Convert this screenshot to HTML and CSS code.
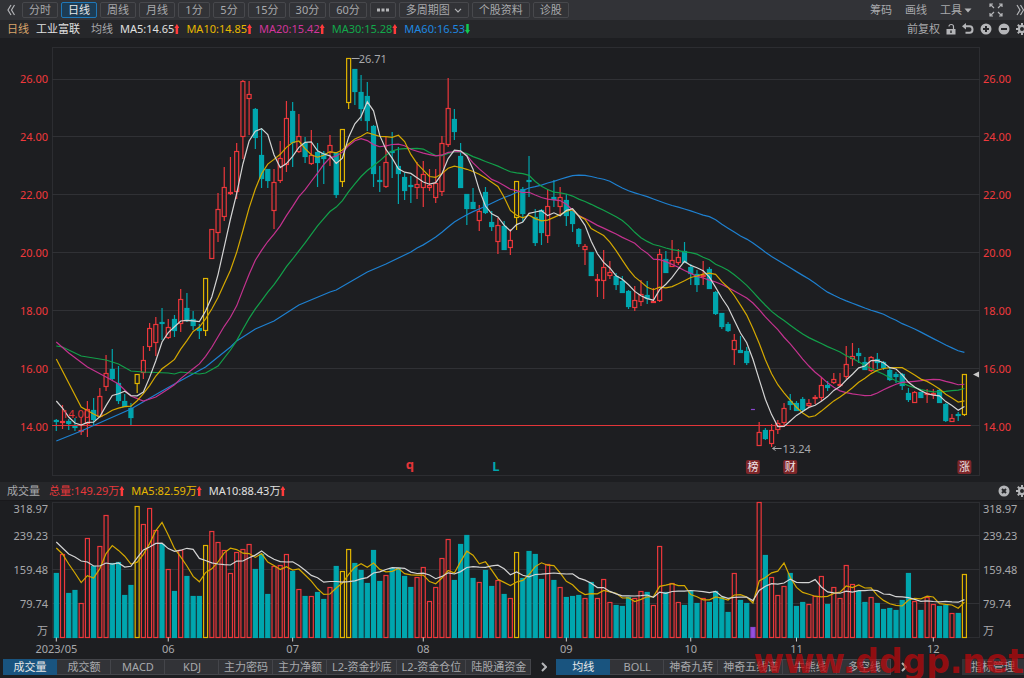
FILE: index.html
```html
<!DOCTYPE html>
<html lang="zh-CN">
<head>
    <meta charset="UTF-8">
    <meta name="viewport" content="width=device-width, initial-scale=1.0">
    <title>工业富联 日线</title>
    <link rel="stylesheet" href="styles.css">
</head>
<body>
    <header class="toolbar">
        <button class="icon-btn" aria-label="收起">
            <svg width="8" height="12" viewBox="0 0 8 12"><path d="M4 1 L1 6 L4 11 M7.500 1 L4.500 6 L7.500 11"/></svg>
        </button>
        <nav class="periods">
            <button>分时</button>
            <button class="active">日线</button>
            <button>周线</button>
            <button>月线</button>
            <button>1分</button>
            <button>5分</button>
            <button>15分</button>
            <button>30分</button>
            <button>60分</button>
            <button class="more" aria-label="更多周期">
                <svg class="dots" width="12" height="4" viewBox="0 0 12 4"><path d="M0 .5h3v3h-3z M4.500 .5h3v3h-3z M9 .5h3v3h-3z"/></svg>
            </button>
            <button>多周期图
                <svg width="8" height="5" viewBox="0 0 8 5"><path d="M1 .8 L4 3.800 L7 .8"/></svg>
            </button>
            <button>个股资料</button>
            <button>诊股</button>
        </nav>
        <div class="tools">
            <button>筹码</button>
            <button>画线</button>
            <button class="menu">工具<svg class="solid" width="8" height="5" viewBox="0 0 8 5"><path d="M.5 .5h7L4 4.500z"/></svg></button>
            <button class="expand" aria-label="全屏">
                <svg width="14" height="14" viewBox="0 0 14 14"><path d="M1 4V1H4 M1.500 1.500L5 5 M10 1H13V4 M12.500 1.500L9 5 M1 10V13H4 M1.500 12.500L5 9 M10 13H13V10 M12.500 12.500L9 9"/></svg>
            </button>
            <button class="collapse" aria-label="展开">
                <svg width="8" height="12" viewBox="0 0 8 12"><path d="M1 1 L4 6 L1 11 M4.500 1 L7.500 6 L4.500 11"/></svg>
            </button>
        </div>
    </header>

    <div class="info-bar">
        <span class="period">日线</span>
        <span class="stock">工业富联</span>
        <span class="ma-label">均线</span>
        <span class="ma5 up">MA5:14.65</span>
        <span class="ma10 up">MA10:14.85</span>
        <span class="ma20 up">MA20:15.42</span>
        <span class="ma30 up">MA30:15.28</span>
        <span class="ma60 down">MA60:16.53</span>
        <div class="info-tools">
            <button>前复权</button>
            <button aria-label="锁定">
                <svg class="solid" width="10" height="12" viewBox="0 0 10 12"><path d="M.5 6h9v5.500h-9z"/><path class="line" d="M3 3.500C3 .8 7.500 .8 7.500 3.500V6"/><path class="hole" d="M4.300 7.500h1.400v2.500h-1.400z"/></svg>
            </button>
            <button aria-label="撤销">
                <svg width="12" height="12" viewBox="0 0 12 12"><path class="thick" d="M3 3.200H7.500C11.500 3.200 11.500 9.800 7.500 9.800H3.500"/><path class="fill" d="M0 3.200L4 0V6.400z"/></svg>
            </button>
            <button aria-label="放大">
                <svg class="solid" width="12" height="12" viewBox="0 0 12 12"><circle cx="6" cy="6" r="5.500"/><path class="cut" d="M3 6H9 M6 3V9"/></svg>
            </button>
            <button aria-label="缩小">
                <svg class="solid" width="12" height="12" viewBox="0 0 12 12"><circle cx="6" cy="6" r="5.500"/><path class="cut" d="M3 6H9"/></svg>
            </button>
            <button aria-label="设置">
                <svg class="solid" width="12" height="12" viewBox="0 0 12 12"><circle cx="6" cy="6" r="4.200"/><path class="teeth" d="M6 0V12 M0 6H12 M1.800 1.800L10.200 10.200 M10.200 1.800L1.800 10.200"/><circle class="hole" cx="6" cy="6" r="2"/></svg>
            </button>
        </div>
    </div>

    <main>
        <section class="panel price-panel">
            <div class="axis left">
                <span>26.00</span><span>24.00</span><span>22.00</span><span>20.00</span><span>18.00</span><span>16.00</span><span>14.00</span>
            </div>
            <svg id="priceChart" class="plot"></svg>
            <div class="axis right">
                <span>26.00</span><span>24.00</span><span>22.00</span><span>20.00</span><span>18.00</span><span>16.00</span><span>14.00</span>
            </div>
        </section>

        <div class="info-bar volume-bar">
            <span>成交量</span>
            <span class="total up">总量:149.29万</span>
            <span class="ma10 up">MA5:82.59万</span>
            <span class="ma5 up">MA10:88.43万</span>
            <div class="info-tools">
                <button aria-label="关闭">
                    <svg class="solid" width="12" height="12" viewBox="0 0 12 12"><circle cx="6" cy="6" r="5.500"/><path class="cut" d="M4 4L8 8 M8 4L4 8"/></svg>
                </button>
                <button aria-label="指标设置">
                    <svg class="solid" width="12" height="12" viewBox="0 0 12 12"><circle cx="6" cy="6" r="4.200"/><path class="teeth" d="M6 0V12 M0 6H12 M1.800 1.800L10.200 10.200 M10.200 1.800L1.800 10.200"/><circle class="hole" cx="6" cy="6" r="2"/></svg>
                </button>
            </div>
        </div>

        <section class="panel volume-panel">
            <div class="axis left">
                <span>318.97</span><span>239.23</span><span>159.48</span><span>79.74</span><span>万</span>
            </div>
            <svg id="volumeChart" class="plot"></svg>
            <div class="axis right">
                <span>318.97</span><span>239.23</span><span>159.48</span><span>79.74</span><span>万</span>
            </div>
        </section>
    </main>

    <footer class="tabs">
        <nav class="tab-group">
            <button class="active">成交量</button>
            <button>成交额</button>
            <button>MACD</button>
            <button>KDJ</button>
            <button>主力密码</button>
            <button>主力净额</button>
            <button>L2-资金抄底</button>
            <button>L2-资金仓位</button>
            <button>陆股通资金</button>
        </nav>
        <button class="next" aria-label="下一页"><svg width="6" height="10" viewBox="0 0 6 10"><path class="thick" d="M1 1L5 5L1 9"/></svg></button>
        <nav class="tab-group">
            <button class="active">均线</button>
            <button>BOLL</button>
            <button>神奇九转</button>
            <button>神奇五线谱</button>
            <button>牛熊线</button>
            <button>多空线</button>
        </nav>
        <button class="next" aria-label="下一页"><svg width="6" height="10" viewBox="0 0 6 10"><path class="thick" d="M1 1L5 5L1 9"/></svg></button>
        <button class="manage">指标管理</button>
    </footer>

    <div class="watermark">www.ddgp.net</div>

    <script src="chart.js"></script>
</body>
</html>
```
FILE: styles.css
```css
* {
    box-sizing: border-box;
}
body {
    margin: 0;
    height: 100vh;
    display: flex;
    flex-direction: column;
    overflow: hidden;
    position: relative;
    background: #1d1e21;
    color: #a8a9ac;
    font-family: "Noto Sans", "Noto Sans CJK SC", sans-serif;
    font-size: 11px;
    line-height: 16px;
}
button {
    display: inline-flex;
    align-items: center;
    justify-content: center;
    flex: none;
    padding: 0;
    border: 0;
    background: none;
    color: inherit;
    font: inherit;
    white-space: nowrap;
    cursor: pointer;
}
button svg {
    fill: none;
    stroke: #b4b5b8;
    stroke-width: 1.2;
}
button svg.solid, button svg.dots, button svg .fill {
    fill: #b4b5b8;
    stroke: none;
}
button svg .line { fill: none; stroke: #b4b5b8; stroke-width: 1.2; }
button svg .thick { stroke-width: 2; }
button svg .teeth { stroke: #b4b5b8; stroke-width: 2; }
button svg .cut { stroke: #26272a; stroke-width: 2; }
button svg .hole { fill: #26272a; }

/* top toolbar */
.toolbar {
    display: flex;
    align-items: center;
    flex: none;
    height: 20px;
    padding-left: 6px;
    background: #323337;
}
.icon-btn {
    width: 10px;
}
.periods {
    display: flex;
    gap: 3px;
    margin-left: 6px;
}
.periods button {
    height: 16px;
    min-width: 32px;
    padding: 0 6px;
    gap: 4px;
    border: 1px solid #47484c;
    border-radius: 2px;
}
.periods button.more {
    min-width: 26px;
}
.periods button.active {
    background: #1d3c54;
    border-color: #1f78b8;
    color: #e8e8e8;
}
.tools {
    display: flex;
    align-items: center;
    gap: 13px;
    margin-left: auto;
}
.tools .menu {
    gap: 2px;
}
.tools .expand {
    margin-left: 4px;
}

/* legend rows */
.info-bar {
    display: flex;
    align-items: center;
    flex: none;
    gap: 7px;
    height: 18px;
    padding-left: 7px;
    overflow: hidden;
    white-space: nowrap;
    background: #26272a;
}
.volume-bar {
    height: 19px;
    border-bottom: 1px solid #19191c;
}
.info-tools {
    display: flex;
    gap: 6px;
    margin-left: auto;
    margin-right: -4px;
}
.period { color: #d9a56b; }
.stock { color: #e0e0e0; }
.ma-label { padding-left: 4px; }
.ma5 { color: #e0e0e0; }
.ma10 { color: #e6b800; }
.ma20 { color: #d2359c; }
.ma30 { color: #12a84a; }
.ma60 { color: #1e88e0; }
.total { color: #e8383b; padding-left: 2px; }
.up::after, .down::after {
    content: "";
    display: inline-block;
    width: 5px;
    height: 10px;
    vertical-align: -1px;
    background: #ff3b3b;
    clip-path: polygon(50% 0, 100% 40%, 75% 40%, 75% 100%, 25% 100%, 25% 40%, 0 40%);
}
.down::after {
    background: #12c850;
    clip-path: polygon(50% 100%, 100% 60%, 75% 60%, 75% 0, 25% 0, 25% 60%, 0 60%);
}

/* charts */
main {
    flex: 1;
    min-height: 0;
    display: flex;
    flex-direction: column;
}
.panel {
    display: grid;
    grid-template-columns: 52px 1fr 44px;
    min-height: 0;
}
.price-panel {
    flex: 1;
}
.volume-panel {
    flex: none;
    height: 157px;
}
.plot {
    display: block;
    width: 100%;
    height: 100%;
    min-height: 0;
    overflow: visible;
}
.axis {
    display: flex;
    flex-direction: column;
    justify-content: space-between;
    padding: 33px 4px 47px;
}
.axis.left {
    text-align: right;
}
.axis.right {
    padding-left: 3px;
}
.price-panel .axis {
    color: #f0393c;
}
.volume-panel .axis {
    display: grid;
    grid-template-columns: 1fr;
    grid-template-rows: 27px 34px 34px 27px 16px;
    align-content: start;
    padding-top: 0;
    padding-bottom: 0;
}

/* bottom tabs */
.tabs {
    display: flex;
    align-items: center;
    flex: none;
    height: 20px;
    padding: 0 0 3px 3px;
}
.tab-group {
    display: flex;
    background: #323337;
}
.tab-group button {
    height: 16px;
    min-width: 54px;
    padding: 0 4px 0 5px;
    border: 1px solid #44454a;
    border-left-width: 0;
}
.tab-group button.active {
    background: #19547f;
    border-color: #19547f;
    color: #e8e8e8;
}
.next {
    width: 25px;
    height: 16px;
}
.manage {
    height: 16px;
    margin-left: auto;
    padding: 0 9px;
    background: #323337;
}
.watermark {
    position: absolute;
    right: 0;
    bottom: 3px;
    color: rgba(190, 8, 12, 0.72);
    font: bold 33px/26px "DejaVu Sans", sans-serif;
    pointer-events: none;
}

/* svg parts */
.frame { fill: none; stroke: #2c2d31; }
.grid { stroke: #303135; }
.base { stroke: #e33539; stroke-width: 1.2; }
.tick { stroke: #d0d0d0; }
.arrow { fill: none; stroke: #a8a9ac; }
.marker { fill: #c8c8c8; }
.candle { stroke-width: 1.2; }
.candle.r { stroke: #ec373b; fill: #1d1e21; }
.candle.y { stroke: #e0b400; fill: #1d1e21; }
.candle.c { stroke: #00a6ae; fill: #00a6ae; }
.candle.p { stroke: #8a46d0; fill: #9450e0; }
.curve { fill: none; stroke-width: 1.2; }
.curve.white { stroke: #d4d4d4; }
.curve.yellow { stroke: #d4a800; }
.curve.pink { stroke: #c4328f; }
.curve.green { stroke: #12a04a; }
.curve.blue { stroke: #1e80d0; }
.note { fill: #a8a9ac; }
.note.red { fill: #e33539; }
.note.mid { text-anchor: middle; }
.badge { fill: #7d2629; }
.badge-text { fill: #f0e4e4; text-anchor: middle; }
.letter { font-size: 13px; font-weight: bold; text-anchor: middle; }
.letter.q { fill: #e33539; }
.letter.l { fill: #00a6ae; }
```
FILE: chart.js
```js
// Each day: type, wick top, body top, body bottom, wick bottom, volume top.
// Levels are chart units measured downward: 26.00 sits at 79, 14.00 at 426.
// r = rising, c = falling, y = limit up, p = placeholder day
const days = [
    ['c', 419, 420, 422, 431, 573], ['r', 405, 421, 422, 429, 554], ['c', 419, 421, 424, 430, 593],
    ['c', 418, 425, 428, 431, 590], ['r', 418, 430, 432, 435, 603], ['r', 401, 409, 424, 437, 538],
    ['c', 398, 410, 420, 426, 566], ['r', 388, 396, 417, 417, 546], ['r', 355, 373, 387, 391, 515],
    ['c', 349, 369, 379, 380, 563], ['c', 366, 383, 401, 404, 562], ['c', 394, 401, 407, 407, 595],
    ['c', 403, 408, 418, 425, 585], ['y', 374, 374, 384, 393, 506], ['r', 346, 360, 373, 379, 524],
    ['r', 323, 328, 347, 351, 508], ['r', 317, 324, 343, 356, 530], ['c', 308, 322, 324, 340, 544],
    ['r', 319, 327, 338, 339, 569], ['c', 315, 319, 331, 337, 591], ['r', 289, 299, 324, 332, 550],
    ['c', 293, 308, 321, 322, 576], ['c', 311, 319, 326, 330, 596], ['c', 324, 328, 331, 339, 596],
    ['y', 278, 278, 331, 336, 545], ['r', 229, 229, 259, 259, 531], ['r', 193, 209, 233, 242, 542],
    ['r', 167, 187, 217, 221, 550], ['r', 157, 192, 193, 195, 573], ['r', 143, 151, 192, 199, 552],
    ['r', 80, 81, 137, 159, 549], ['r', 81, 94, 99, 135, 544], ['c', 108, 109, 138, 149, 569],
    ['c', 128, 155, 179, 188, 554], ['c', 169, 169, 181, 188, 594], ['r', 169, 182, 211, 229, 566],
    ['r', 141, 158, 181, 183, 565], ['r', 101, 118, 165, 172, 554], ['c', 102, 111, 143, 167, 571],
    ['r', 114, 136, 152, 153, 589], ['c', 137, 143, 157, 163, 596], ['r', 130, 155, 164, 165, 596],
    ['c', 143, 152, 163, 187, 592], ['c', 151, 153, 159, 184, 599], ['r', 135, 145, 153, 166, 587],
    ['c', 152, 153, 195, 198, 566], ['y', 129, 129, 182, 187, 571], ['y', 58, 58, 103, 109, 549],
    ['c', 69, 69, 92, 105, 563], ['c', 75, 92, 109, 121, 570], ['c', 82, 96, 121, 131, 583],
    ['c', 125, 126, 174, 187, 550], ['c', 166, 180, 181, 192, 581], ['r', 137, 162, 187, 188, 575],
    ['c', 132, 151, 153, 178, 568], ['c', 147, 166, 174, 204, 568], ['c', 173, 177, 191, 200, 576],
    ['c', 176, 185, 187, 203, 587], ['r', 162, 184, 188, 199, 577], ['r', 161, 174, 188, 207, 567],
    ['r', 169, 185, 188, 191, 601], ['r', 169, 183, 198, 203, 587], ['r', 136, 143, 192, 196, 558],
    ['r', 78, 108, 145, 147, 539], ['c', 109, 119, 132, 140, 580], ['c', 143, 156, 188, 188, 544],
    ['c', 194, 194, 209, 225, 535], ['c', 188, 202, 209, 209, 578], ['r', 205, 211, 221, 231, 582],
    ['c', 187, 192, 213, 214, 570], ['c', 211, 222, 227, 231, 586], ['r', 218, 225, 242, 254, 580],
    ['c', 221, 226, 250, 250, 594], ['r', 229, 240, 248, 255, 598], ['y', 181, 181, 218, 230, 552],
    ['c', 187, 189, 214, 222, 578], ['c', 156, 180, 182, 197, 551], ['c', 209, 217, 243, 246, 554],
    ['c', 209, 210, 233, 245, 579], ['r', 189, 206, 236, 243, 564], ['c', 180, 197, 200, 207, 580],
    ['r', 187, 197, 207, 215, 587], ['c', 194, 200, 216, 226, 597], ['c', 210, 211, 224, 232, 596],
    ['c', 228, 229, 244, 247, 595], ['r', 244, 246, 250, 265, 598], ['c', 252, 252, 276, 276, 582],
    ['r', 274, 279, 280, 297, 598], ['r', 250, 267, 281, 299, 579], ['r', 261, 272, 276, 279, 602],
    ['c', 273, 276, 285, 290, 605], ['c', 276, 281, 293, 293, 606], ['c', 290, 291, 307, 309, 597],
    ['r', 286, 300, 308, 311, 598], ['r', 280, 294, 302, 306, 591], ['c', 281, 295, 299, 304, 592],
    ['r', 288, 301, 302, 303, 605], ['r', 249, 254, 301, 302, 546], ['c', 251, 259, 273, 273, 592],
    ['r', 240, 260, 267, 267, 583], ['r', 249, 257, 263, 265, 602], ['c', 242, 251, 263, 263, 605],
    ['c', 264, 267, 274, 285, 591], ['c', 270, 274, 285, 292, 603], ['r', 261, 275, 277, 285, 598],
    ['c', 267, 269, 289, 289, 602], ['c', 291, 292, 314, 315, 591], ['c', 313, 313, 327, 329, 597],
    ['c', 322, 324, 331, 332, 612], ['r', 334, 340, 350, 365, 573], ['c', 336, 350, 353, 353, 600],
    ['c', 347, 351, 363, 365, 603], ['p', 409, 409, 409, 409, 627], ['r', 422, 432, 446, 446, 502],
    ['c', 428, 430, 439, 440, 555], ['r', 424, 430, 444, 447, 577], ['r', 420, 423, 430, 434, 595],
    ['r', 403, 408, 423, 427, 586], ['c', 394, 401, 405, 410, 573], ['c', 401, 403, 411, 411, 606],
    ['c', 397, 399, 410, 411, 602], ['r', 399, 403, 406, 408, 604], ['r', 395, 397, 399, 404, 596],
    ['r', 377, 385, 398, 401, 576], ['c', 381, 385, 388, 391, 604], ['r', 373, 379, 383, 384, 587],
    ['r', 373, 384, 386, 387, 598], ['r', 346, 364, 377, 379, 565], ['r', 343, 356, 359, 366, 584],
    ['c', 348, 353, 356, 363, 591], ['c', 357, 362, 370, 370, 602], ['r', 356, 357, 371, 372, 597],
    ['c', 353, 359, 363, 369, 603], ['c', 361, 362, 368, 370, 609], ['c', 368, 370, 380, 381, 608],
    ['c', 372, 374, 377, 383, 610], ['c', 373, 374, 386, 390, 600], ['c', 388, 393, 400, 402, 573],
    ['r', 391, 392, 403, 403, 601], ['c', 392, 392, 398, 398, 610], ['r', 389, 393, 394, 403, 597],
    ['r', 389, 393, 394, 399, 604], ['c', 389, 390, 403, 403, 606], ['c', 403, 404, 421, 422, 605],
    ['r', 414, 418, 422, 422, 613], ['c', 412, 414, 416, 421, 613], ['y', 374, 374, 415, 416, 574]
];

// Start points [day, level] of the averages, for days before the window is full
const averages = [
    { n: 60, color: 'blue', start: [[0, 441], [4, 431], [8, 420], [12, 409], [17, 391], [19, 384], [24, 367], [28, 347], [29, 341], [32, 329], [35, 321], [39, 305], [44, 292], [45, 290], [50, 272], [53, 264], [57, 252], [58, 248]] },
    { n: 30, color: 'green', start: [[0, 346], [1, 347], [4, 356], [8, 360], [10, 364], [12, 371], [14, 372], [18, 373], [19, 374], [20, 372], [23, 374], [24, 373], [26, 366], [28, 350]] },
    { n: 20, color: 'pink', start: [[0, 342], [2, 353], [5, 367], [8, 377], [10, 384], [12, 396], [14, 401], [16, 397], [18, 389]] },
    { n: 10, color: 'yellow', start: [[0, 359], [4, 407], [6, 414], [7, 417], [8, 414]] },
    { n: 5, color: 'white', start: [[0, 401], [1, 408], [2, 417], [3, 423]] }
];
const volumeAverages = [
    { n: 5, color: 'yellow', start: [[0, 548], [1, 554], [2, 564], [3, 573]] },
    { n: 10, color: 'white', start: [[0, 542], [2, 554], [3, 557], [4, 561], [5, 562], [6, 566], [7, 566], [8, 563]] }
];

const months = [[0, '2023/05'], [18, '06'], [38, '07'], [59, '08'], [82, '09'], [102, '10'], [119, '11'], [141, '12']];
const badges = [[112, '榜'], [118, '财'], [146, '涨']];

function add(svg, tag, attrs, text) {
    const el = document.createElementNS('http://www.w3.org/2000/svg', tag);
    for (const key in attrs) el.setAttribute(key, attrs[key]);
    if (text) el.textContent = text;
    svg.appendChild(el);
    return el;
}

function line(svg, cls, x1, y1, x2, y2) {
    add(svg, 'line', { class: cls, x1, y1, x2, y2 });
}

function drawAverage(svg, avg, values, x, y) {
    const points = avg.start.map(p => [x(p[0]), y(p[1])]);
    for (let i = avg.n - 1; i < values.length; i++) {
        let sum = 0;
        for (let k = i - avg.n + 1; k <= i; k++) sum += values[k];
        points.push([x(i), y(sum / avg.n)]);
    }
    add(svg, 'polyline', { class: 'curve ' + avg.color, points: points.join(' ') });
}

function drawPrice() {
    const svg = document.getElementById('priceChart');
    svg.textContent = '';
    const w = svg.clientWidth;
    const x = i => (4.3 + i * 6.22) * w / 928;
    const y = v => (v - 38) * svg.clientHeight / 444;
    const crisp = v => Math.round(y(v)) + 0.5;

    add(svg, 'rect', { class: 'frame', x: 0.5, y: crisp(47), width: w - 1, height: crisp(475) - crisp(47) });
    for (let i = 0; i < 7; i++) line(svg, 'grid', 0, crisp(79 + i * 57.83 - 0.5), w, crisp(79 + i * 57.83 - 0.5));

    days.forEach(([type, high, top, bottom, low], i) => {
        const cls = 'candle ' + type;
        if (type === 'p') {
            line(svg, cls, x(i) - 2, crisp(top), x(i) + 2, crisp(top));
            return;
        }
        if (low > high) line(svg, cls, x(i), y(high), x(i), y(low));
        add(svg, 'rect', { class: cls, x: x(i) - 2, y: crisp(top), width: 4, height: Math.max(1, y(bottom) - y(top) - 1) });
    });

    line(svg, 'base', 0, crisp(425), x(147), crisp(425));
    const closes = days.map(d => d[0] === 'c' ? d[3] : d[2]);
    averages.forEach(avg => drawAverage(svg, avg, closes, x, y));

    add(svg, 'text', { class: 'note red', x: 10, y: y(418) }, '14.00');
    add(svg, 'path', { class: 'arrow', d: `M${x(47) + 3} ${crisp(58)}h8` });
    add(svg, 'text', { class: 'note', x: x(47) + 10, y: y(63) }, '26.71');
    add(svg, 'path', { class: 'arrow', d: `M${x(115) + 10} ${crisp(448)}h-9m3 -2l-3 2l3 2` });
    add(svg, 'text', { class: 'note', x: x(115) + 11, y: y(453) }, '13.24');
    add(svg, 'text', { class: 'letter q', x: x(57) - 1, y: y(469) }, 'q');
    add(svg, 'text', { class: 'letter l', x: x(71) - 2, y: y(471) }, 'L');
    badges.forEach(([i, name]) => {
        add(svg, 'rect', { class: 'badge', x: x(i) - 7, y: y(460), width: 14, height: 14, rx: 2 });
        add(svg, 'text', { class: 'badge-text', x: x(i), y: y(471) }, name);
    });
    add(svg, 'path', { class: 'marker', d: `M${w - 7} ${y(374.5)}l6 -3v6z` });
}

function drawVolume() {
    const svg = document.getElementById('volumeChart');
    svg.textContent = '';
    const w = svg.clientWidth;
    const x = i => (4.3 + i * 6.22) * w / 928;
    const y = v => (v - 501) * svg.clientHeight / 157;
    const bottom = Math.round(y(638)) - 0.5;

    add(svg, 'rect', { class: 'frame', x: 0.5, y: 1.5, width: w - 1, height: bottom - 1.5 });
    [535, 569, 603].forEach(v => line(svg, 'grid', 0, Math.round(y(v)) + 0.5, w, Math.round(y(v)) + 0.5));

    days.forEach((day, i) => {
        const top = Math.round(y(day[5])) + 0.5;
        add(svg, 'rect', { class: 'candle ' + day[0], x: x(i) - 2, y: top, width: 4, height: bottom - top });
    });
    volumeAverages.forEach(avg => drawAverage(svg, avg, days.map(d => d[5]), x, y));

    months.forEach(([i, name]) => {
        line(svg, 'tick', x(i), bottom, x(i), bottom + 4);
        add(svg, 'text', { class: 'note mid', x: x(i), y: bottom + 15 }, name);
    });
}

function draw() {
    drawPrice();
    drawVolume();
}

window.addEventListener('resize', draw);
draw();
```
